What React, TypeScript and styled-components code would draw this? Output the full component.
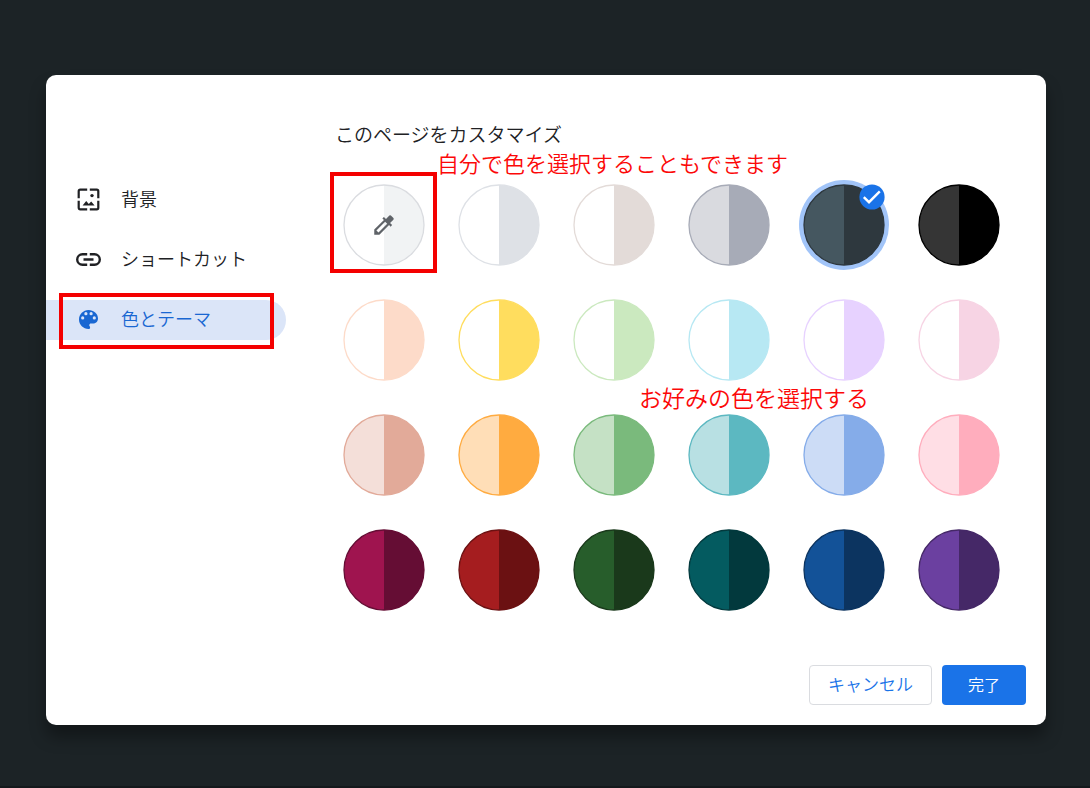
import React, { useState } from "react";
import styled, { createGlobalStyle } from "styled-components";

const GlobalStyle = createGlobalStyle`
  *, *::before, *::after { box-sizing: border-box; }
  body {
    margin: 0;
    background: #1c2326;
    color: #202124;
    font-family: "Noto Sans CJK JP", "Noto Sans", sans-serif;
    font-weight: 350;
  }
  button, input { font: inherit; }
`;

const Page = styled.div`
  min-height: 100vh;
  padding: 75px 44px 61px 46px;
  border-bottom: 2px solid #14191c;
`;

const Dialog = styled.section`
  display: flex;
  width: 100%;
  max-width: 1000px;
  min-height: 650px;
  margin: 0 auto;
  border-radius: 10px;
  background: #fff;
  box-shadow: 0 12px 16px rgba(0, 0, 0, 0.35);
`;

const Menu = styled.nav`
  display: flex;
  flex: 0 0 240px;
  flex-direction: column;
  gap: 20px;
  padding-top: 105px;
`;

const MenuItem = styled.button<{ $active?: boolean }>`
  position: relative;
  display: flex;
  align-items: center;
  gap: 20px;
  height: 40px;
  padding: 0 0 1px 30px;
  border: 0;
  border-radius: 0 20px 20px 0;
  background: ${(p) => (p.$active ? "#dbe5f8" : "transparent")};
  color: ${(p) => (p.$active ? "#1967d2" : "#202124")};
  font-size: 18px;
  line-height: 24px;
  text-align: left;
  white-space: nowrap;
  cursor: pointer;
`;

const MenuIcon = styled.svg`
  flex: none;
  width: 25px;
  height: 25px;
`;

const MenuLabel = styled.span`
  padding-bottom: 3px;
`;

const Content = styled.div`
  display: flex;
  flex: 1;
  flex-direction: column;
  min-width: 0;
  padding: 45px 20px 20px 49px;
`;

const Title = styled.h1`
  margin: 0 0 36px;
  font-size: 19px;
  font-weight: 350;
  line-height: 28px;
`;

const Swatches = styled.div`
  position: relative;
  display: grid;
  grid-template-columns: repeat(auto-fill, 82px);
  gap: 33px;
  padding-left: 8px;
`;

const Swatch = styled.label`
  position: relative;
  display: block;
  width: 82px;
  height: 82px;
  border-radius: 50%;
  cursor: pointer;

  &:has(input:checked) {
    background: #a1c4f8;
    box-shadow: 0 0 0 4px #a1c4f8;
  }
`;

const SwatchInput = styled.input`
  position: absolute;
  inset: 0;
  width: 100%;
  height: 100%;
  margin: 0;
  opacity: 0;
  cursor: pointer;
`;

const Disc = styled.svg`
  display: block;
  width: 82px;
  height: 82px;
`;

const Check = styled.svg`
  position: absolute;
  top: 0;
  right: 0;
  width: 26px;
  height: 26px;
`;

const Dropper = styled.svg`
  position: absolute;
  top: 28px;
  left: 28px;
  width: 26px;
  height: 26px;
`;

const Frame = styled.span<{ $inset: string }>`
  position: absolute;
  inset: ${(p) => p.$inset};
  border: 4px solid #f40000;
  pointer-events: none;
`;

const Note = styled.p<{ $top: number; $left: number; $size: number }>`
  position: absolute;
  top: ${(p) => p.$top}px;
  left: ${(p) => p.$left}px;
  margin: 0;
  color: #fc0808;
  font-size: ${(p) => p.$size}px;
  line-height: 30px;
  white-space: nowrap;
  pointer-events: none;
`;

const Footer = styled.footer`
  display: flex;
  justify-content: flex-end;
  gap: 10px;
  margin-top: auto;
`;

const Action = styled.button<{ $primary?: boolean }>`
  height: 40px;
  padding: 0 ${(p) => (p.$primary ? 26 : 18)}px 3px;
  border: ${(p) => (p.$primary ? "0" : "1px solid #dadce0")};
  border-radius: 4px;
  background: ${(p) => (p.$primary ? "#1a73e8" : "#fff")};
  color: ${(p) => (p.$primary ? "#fff" : "#1a73e8")};
  font-size: ${(p) => (p.$primary ? 16 : 17)}px;
  line-height: 24px;
  white-space: nowrap;
  cursor: pointer;
`;

type Color = { name: string; left: string; right: string; ring?: string };

const colors: Color[] = [
  { name: "カスタムカラー", left: "#ffffff", right: "#f1f3f4", ring: "#dadce0" },
  { name: "ライトグレー", left: "#ffffff", right: "#dee1e6" },
  { name: "ベージュ", left: "#ffffff", right: "#e3dbd8" },
  { name: "グレー", left: "#d9dadf", right: "#a7abb7" },
  { name: "ダークグレー", left: "#455760", right: "#2e383e" },
  { name: "ブラック", left: "#353535", right: "#000000" },
  { name: "ピーチ", left: "#ffffff", right: "#fddbc9" },
  { name: "イエロー", left: "#ffffff", right: "#ffdd5e" },
  { name: "ライトグリーン", left: "#ffffff", right: "#cbe9bf" },
  { name: "ライトブルー", left: "#ffffff", right: "#b7e8f3" },
  { name: "ラベンダー", left: "#ffffff", right: "#e7d2ff" },
  { name: "ライトピンク", left: "#ffffff", right: "#f7d4e4" },
  { name: "ローズ", left: "#f4dfd9", right: "#e2aa99" },
  { name: "オレンジ", left: "#ffdeb7", right: "#ffab40" },
  { name: "グリーン", left: "#c5e1c5", right: "#7aba7c" },
  { name: "アクア", left: "#b8e0e3", right: "#5cb8c1" },
  { name: "ブルー", left: "#ccdcf6", right: "#85ace9" },
  { name: "ピンク", left: "#ffdee5", right: "#ffadbd" },
  { name: "マゼンタ", left: "#9f144f", right: "#650d34" },
  { name: "レッド", left: "#a51d1f", right: "#6b1112" },
  { name: "ダークグリーン", left: "#275d2b", right: "#1a391b" },
  { name: "ティール", left: "#045b60", right: "#02393d" },
  { name: "ネイビー", left: "#135298", right: "#0c3460" },
  { name: "パープル", left: "#6b40a0", right: "#452867" },
];

const BackgroundIcon = () => (
  <MenuIcon viewBox="0 0 25 25" fill="none" aria-hidden="true">
    <path
      d="M11.2 2.7H4.2Q2.7 2.7 2.7 4.2V11.2M13.8 2.7H20.8Q22.3 2.7 22.3 4.2V11.2M11.2 22.3H4.2Q2.7 22.3 2.7 20.8V13.8M13.8 22.3H20.8Q22.3 22.3 22.3 20.8V13.8"
      stroke="currentColor"
      strokeWidth="2.2"
    />
    <circle cx="16" cy="8.6" r="1.7" fill="currentColor" />
    <path d="M6.6 18.6 10.2 14 12.8 17 15.2 14.6 18.6 18.6Z" fill="currentColor" />
  </MenuIcon>
);

const LinkIcon = () => (
  <MenuIcon viewBox="0 0 25 25" fill="none" stroke="currentColor" strokeWidth="2.4" aria-hidden="true">
    <path d="M11.2 7.2H6.5a5.3 5.3 0 0 0 0 10.6H11.2M13.8 7.2H18.5a5.3 5.3 0 0 1 0 10.6H13.8M7.5 12.5H17.5" />
  </MenuIcon>
);

const PaletteIcon = () => (
  <MenuIcon viewBox="0 0 25 25" aria-hidden="true">
    <path
      transform="translate(0.5 0.5)"
      fill="currentColor"
      d="M12 2.5C6.8 2.5 2.5 6.8 2.5 12s4.3 9.5 9.5 9.5c.9 0 1.6-.7 1.6-1.6 0-.4-.2-.8-.4-1.1-.3-.3-.4-.6-.4-1.1 0-.9.7-1.6 1.6-1.6h1.9c2.9 0 5.2-2.4 5.2-5.2C21.5 6.2 17.2 2.5 12 2.5ZM6.2 12a1.6 1.6 0 1 1 0-3.2 1.6 1.6 0 0 1 0 3.2Zm3.2-4.2a1.6 1.6 0 1 1 0-3.2 1.6 1.6 0 0 1 0 3.2Zm5.2 0a1.6 1.6 0 1 1 0-3.2 1.6 1.6 0 0 1 0 3.2Zm3.2 4.2a1.6 1.6 0 1 1 0-3.2 1.6 1.6 0 0 1 0 3.2Z"
    />
  </MenuIcon>
);

export default function App() {
  const [selected, setSelected] = useState(4);

  return (
    <>
      <GlobalStyle />
      <Page>
        <Dialog role="dialog" aria-labelledby="dialog-title">
          <Menu aria-label="カスタマイズ">
            <MenuItem type="button">
              <BackgroundIcon />
              <MenuLabel>背景</MenuLabel>
            </MenuItem>
            <MenuItem type="button">
              <LinkIcon />
              <MenuLabel>ショートカット</MenuLabel>
            </MenuItem>
            <MenuItem type="button" $active aria-current="page">
              <PaletteIcon />
              <MenuLabel>色とテーマ</MenuLabel>
              <Frame $inset="-7px 12px -9px 13px" />
            </MenuItem>
          </Menu>
          <Content>
            <Title id="dialog-title">このページをカスタマイズ</Title>
            <Swatches role="radiogroup" aria-labelledby="dialog-title">
              {colors.map((c, i) => (
                <Swatch key={c.name}>
                  <SwatchInput
                    type="radio"
                    name="color"
                    aria-label={c.name}
                    checked={selected === i}
                    onChange={() => setSelected(i)}
                  />
                  <Disc viewBox="0 0 82 82" aria-hidden="true">
                    <circle cx="41" cy="41" r="40" fill={c.left} />
                    <path d="M41 1a40 40 0 0 1 0 80Z" fill={c.right} />
                    <circle cx="41" cy="41" r="40" fill="none" stroke={c.ring ?? c.right} strokeWidth="1.3" />
                  </Disc>
                  {i === 0 && (
                    <>
                      <Dropper viewBox="0 0 24 24" fill="#5f6368" aria-hidden="true">
                        <path d="m20.71 5.63-2.34-2.34a1 1 0 0 0-1.41 0l-3.12 3.12-1.93-1.91-1.41 1.41 1.42 1.42L3 16.25V21h4.75l8.92-8.92 1.42 1.42 1.41-1.41-1.92-1.92 3.12-3.12c.4-.4.4-1.03.01-1.42ZM6.92 19 5 17.08l8.06-8.06 1.92 1.92L6.92 19Z" />
                      </Dropper>
                      <Frame $inset="-12px -12px -7px -13px" />
                    </>
                  )}
                  {selected === i && (
                    <Check viewBox="0 0 26 26" aria-hidden="true">
                      <circle cx="13" cy="13" r="12.6" fill="#1a73e8" />
                      <path d="M4.8 13.2 10 18.2 20.8 7.4" fill="none" stroke="#fff" strokeWidth="2.4" />
                    </Check>
                  )}
                </Swatch>
              ))}
              <Note $top={-37} $left={102} $size={22}>
                自分で色を選択することもできます
              </Note>
              <Note $top={198} $left={304} $size={23}>
                お好みの色を選択する
              </Note>
            </Swatches>
            <Footer>
              <Action type="button">キャンセル</Action>
              <Action type="button" $primary>
                完了
              </Action>
            </Footer>
          </Content>
        </Dialog>
      </Page>
    </>
  );
}
